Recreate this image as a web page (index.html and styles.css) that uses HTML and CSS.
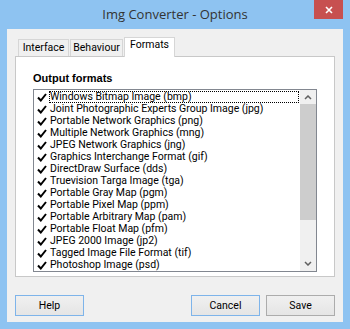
FILE: index.html
```html
<!DOCTYPE html>
<html>
<head>
<meta charset="utf-8">
<title>Img Converter - Options</title>
<link rel="stylesheet" href="styles.css">
</head>
<body>
<div class="window">
  <div class="titlebar">
    <div class="title">Img Converter - Options</div>
    <div class="close">
      <svg width="8" height="8" viewBox="0 0 8 8"><path d="M1 1L7 7M7 1L1 7" stroke="#fff" stroke-width="1.6" fill="none"/></svg>
    </div>
  </div>
  <div class="client">
    <div class="tabs">
      <div class="tab t-interface">Interface</div>
      <div class="tab t-behaviour">Behaviour</div>
      <div class="tab t-formats active">Formats</div>
    </div>
    <div class="panel">
      <div class="group-label">Output formats</div>
      <div class="listbox">
        <div class="items">
          <div class="row"><svg class="check" viewBox="0 0 10 9"><path d="M1 4.5L3.8 7.5L9 1" stroke="#000" stroke-width="2" fill="none"/></svg><span class="label focus">Windows Bitmap Image (bmp)</span></div>
          <div class="row"><svg class="check" viewBox="0 0 10 9"><path d="M1 4.5L3.8 7.5L9 1" stroke="#000" stroke-width="2" fill="none"/></svg><span class="label">Joint Photographic Experts Group Image (jpg)</span></div>
          <div class="row"><svg class="check" viewBox="0 0 10 9"><path d="M1 4.5L3.8 7.5L9 1" stroke="#000" stroke-width="2" fill="none"/></svg><span class="label">Portable Network Graphics (png)</span></div>
          <div class="row"><svg class="check" viewBox="0 0 10 9"><path d="M1 4.5L3.8 7.5L9 1" stroke="#000" stroke-width="2" fill="none"/></svg><span class="label">Multiple Network Graphics (mng)</span></div>
          <div class="row"><svg class="check" viewBox="0 0 10 9"><path d="M1 4.5L3.8 7.5L9 1" stroke="#000" stroke-width="2" fill="none"/></svg><span class="label">JPEG Network Graphics (jng)</span></div>
          <div class="row"><svg class="check" viewBox="0 0 10 9"><path d="M1 4.5L3.8 7.5L9 1" stroke="#000" stroke-width="2" fill="none"/></svg><span class="label">Graphics Interchange Format (gif)</span></div>
          <div class="row"><svg class="check" viewBox="0 0 10 9"><path d="M1 4.5L3.8 7.5L9 1" stroke="#000" stroke-width="2" fill="none"/></svg><span class="label">DirectDraw Surface (dds)</span></div>
          <div class="row"><svg class="check" viewBox="0 0 10 9"><path d="M1 4.5L3.8 7.5L9 1" stroke="#000" stroke-width="2" fill="none"/></svg><span class="label">Truevision Targa Image (tga)</span></div>
          <div class="row"><svg class="check" viewBox="0 0 10 9"><path d="M1 4.5L3.8 7.5L9 1" stroke="#000" stroke-width="2" fill="none"/></svg><span class="label">Portable Gray Map (pgm)</span></div>
          <div class="row"><svg class="check" viewBox="0 0 10 9"><path d="M1 4.5L3.8 7.5L9 1" stroke="#000" stroke-width="2" fill="none"/></svg><span class="label">Portable Pixel Map (ppm)</span></div>
          <div class="row"><svg class="check" viewBox="0 0 10 9"><path d="M1 4.5L3.8 7.5L9 1" stroke="#000" stroke-width="2" fill="none"/></svg><span class="label">Portable Arbitrary Map (pam)</span></div>
          <div class="row"><svg class="check" viewBox="0 0 10 9"><path d="M1 4.5L3.8 7.5L9 1" stroke="#000" stroke-width="2" fill="none"/></svg><span class="label">Portable Float Map (pfm)</span></div>
          <div class="row"><svg class="check" viewBox="0 0 10 9"><path d="M1 4.5L3.8 7.5L9 1" stroke="#000" stroke-width="2" fill="none"/></svg><span class="label">JPEG 2000 Image (jp2)</span></div>
          <div class="row"><svg class="check" viewBox="0 0 10 9"><path d="M1 4.5L3.8 7.5L9 1" stroke="#000" stroke-width="2" fill="none"/></svg><span class="label">Tagged Image File Format (tif)</span></div>
          <div class="row"><svg class="check" viewBox="0 0 10 9"><path d="M1 4.5L3.8 7.5L9 1" stroke="#000" stroke-width="2" fill="none"/></svg><span class="label">Photoshop Image (psd)</span></div>
        </div>
        <div class="scrollbar">
          <div class="sb-btn sb-up"><svg width="8" height="5" viewBox="0 0 8 5"><path d="M1 4L4 1L7 4" stroke="#606060" stroke-width="1.5" fill="none"/></svg></div>
          <div class="sb-thumb"></div>
          <div class="sb-track"></div>
          <div class="sb-btn sb-down"><svg width="8" height="5" viewBox="0 0 8 5"><path d="M1 1L4 4L7 1" stroke="#606060" stroke-width="1.5" fill="none"/></svg></div>
        </div>
      </div>
    </div>
    <div class="buttons">
      <button class="btn blue">Help</button>
      <div class="spacer"></div>
      <button class="btn blue">Cancel</button>
      <button class="btn">Save</button>
    </div>
  </div>
</div>
</body>
</html>
```

FILE: styles.css
```css
body {
  margin: 0;
}

.window {
  width: 350px;
  height: 329px;
  box-sizing: border-box;
  background: #8ec3f1;
  padding: 0 7px 7px;
  display: flex;
  flex-direction: column;
  font-family: Roboto, "Liberation Sans", Arial, sans-serif;
  font-size: 10.5px;
  color: #000;
}

.titlebar {
  height: 29px;
  flex: none;
  display: grid;
  grid-template-columns: 1fr auto 1fr;
}

.title {
  grid-column: 2;
  align-self: center;
  font-family: "Open Sans", sans-serif;
  font-size: 13px;
  line-height: 17px;
  color: #333;
  white-space: nowrap;
}

.close {
  grid-column: 3;
  justify-self: end;
  align-self: start;
  width: 29px;
  height: 19px;
  background: #c75050;
  display: flex;
  align-items: center;
  justify-content: center;
}

.close svg {
  display: block;
}

.client {
  flex: 1;
  background: #f0f0f0;
  padding: 8px 8px 0;
  display: flex;
  flex-direction: column;
}

.tabs {
  height: 19px;
  display: flex;
  align-items: flex-end;
  padding-left: 3px;
}

.tab {
  height: 17px;
  box-sizing: border-box;
  border: 1px solid #d6d6d6;
  border-bottom: none;
  background: #f0f0f0;
  text-align: center;
  line-height: 15px;
  margin-right: 1px;
}

.t-interface { width: 51px; }
.t-behaviour { width: 53px; }
.t-formats { width: 51px; }

.tab.active {
  height: 20px;
  margin-bottom: -1px;
  background: #fff;
  line-height: 13px;
  position: relative;
  z-index: 1;
}

.panel {
  width: 320px;
  height: 221px;
  box-sizing: border-box;
  border: 1px solid #c8c8c8;
  background: #fff;
  padding: 15px 0 0 17px;
}

.group-label {
  font-family: "Liberation Sans", Arial, sans-serif;
  font-weight: bold;
  font-size: 11px;
  line-height: 13px;
}

.listbox {
  margin-top: 4px;
  width: 284px;
  height: 183px;
  box-sizing: border-box;
  border: 1px solid #828790;
  display: flex;
}

.items {
  flex: 1;
  padding-top: 1px;
  overflow: hidden;
}

.row {
  height: 12px;
  display: flex;
  align-items: center;
}

.check {
  width: 10px;
  height: 9px;
  margin-left: 3px;
  margin-right: 2px;
  flex: none;
}

.label {
  flex: 1;
  height: 12px;
  box-sizing: border-box;
  border: 1px dotted transparent;
  line-height: 10px;
  margin-right: 1px;
  white-space: nowrap;
}

.label.focus {
  border-color: #000;
}

.scrollbar {
  width: 16px;
  flex: none;
  display: flex;
  flex-direction: column;
  background: #f0f0f0;
}

.sb-btn {
  display: flex;
  align-items: center;
  justify-content: center;
}

.sb-btn svg {
  display: block;
}

.sb-up { height: 14px; }
.sb-thumb { height: 116px; background: #cdcdcd; }
.sb-track { flex: 1; }
.sb-down { height: 16px; }

.buttons {
  margin-top: 18px;
  width: 320px;
  display: flex;
  gap: 6px;
}

.spacer {
  flex: 1;
}

.btn {
  width: 69px;
  height: 21px;
  box-sizing: border-box;
  border: 1px solid #acacac;
  background: linear-gradient(#f0f0f0, #e5e5e5);
  font-family: Roboto, "Liberation Sans", Arial, sans-serif;
  font-size: 10.5px;
  color: #000;
  padding: 0;
  margin: 0;
}

.btn.blue {
  border-color: #7eb4ea;
}
```
